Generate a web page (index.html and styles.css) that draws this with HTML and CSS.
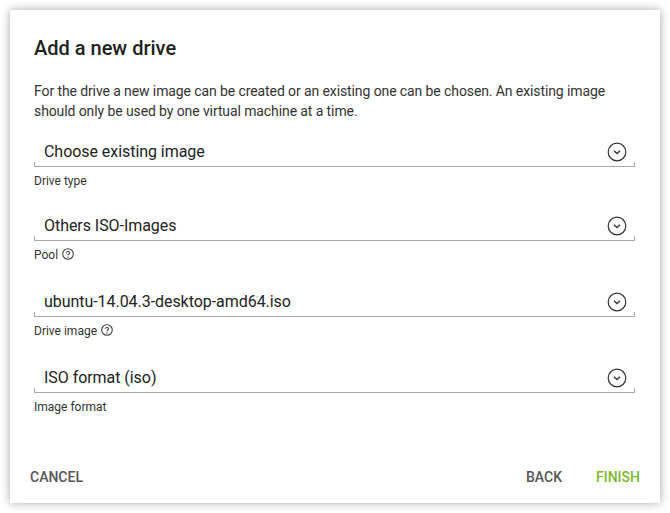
FILE: index.html
```html
<!DOCTYPE html>
<html>
<head>
<meta charset="utf-8">
<link rel="stylesheet" href="styles.css">
</head>
<body>
<div class="dialog">
  <div class="content">
    <h1 class="title">Add a new drive</h1>
    <p class="intro">For the drive a new image can be created or an existing one can be chosen. An existing image should only be used by one virtual machine at a time.</p>

    <div class="field">
      <div class="select"><span class="value">Choose existing image</span>
        <svg class="chev" width="20" height="20" viewBox="0 0 20 20"><circle cx="10" cy="10" r="8.8" fill="none" stroke="#333" stroke-width="1.2"/><path d="M7 8.8 L10 11.6 L13 8.8" fill="none" stroke="#333" stroke-width="1.3"/></svg>
      </div>
      <div class="label">Drive type</div>
    </div>

    <div class="field">
      <div class="select"><span class="value">Others ISO-Images</span>
        <svg class="chev" width="20" height="20" viewBox="0 0 20 20"><circle cx="10" cy="10" r="8.8" fill="none" stroke="#333" stroke-width="1.2"/><path d="M7 8.8 L10 11.6 L13 8.8" fill="none" stroke="#333" stroke-width="1.3"/></svg>
      </div>
      <div class="label has-help">Pool <svg class="help" width="12" height="12" viewBox="0 0 12 12"><circle cx="6" cy="6" r="5.3" fill="none" stroke="#444" stroke-width="1.1"/><path d="M4.3 4.8 C4.3 3.1 7.7 3.1 7.7 4.8 C7.7 6 6 6 6 7.3" fill="none" stroke="#444" stroke-width="1.1"/><circle cx="6" cy="9" r="0.7" fill="#444"/></svg></div>
    </div>

    <div class="field">
      <div class="select"><span class="value">ubuntu-14.04.3-desktop-amd64.iso</span>
        <svg class="chev" width="20" height="20" viewBox="0 0 20 20"><circle cx="10" cy="10" r="8.8" fill="none" stroke="#333" stroke-width="1.2"/><path d="M7 8.8 L10 11.6 L13 8.8" fill="none" stroke="#333" stroke-width="1.3"/></svg>
      </div>
      <div class="label has-help">Drive image <svg class="help" width="12" height="12" viewBox="0 0 12 12"><circle cx="6" cy="6" r="5.3" fill="none" stroke="#444" stroke-width="1.1"/><path d="M4.3 4.8 C4.3 3.1 7.7 3.1 7.7 4.8 C7.7 6 6 6 6 7.3" fill="none" stroke="#444" stroke-width="1.1"/><circle cx="6" cy="9" r="0.7" fill="#444"/></svg></div>
    </div>

    <div class="field">
      <div class="select"><span class="value">ISO format (iso)</span>
        <svg class="chev" width="20" height="20" viewBox="0 0 20 20"><circle cx="10" cy="10" r="8.8" fill="none" stroke="#333" stroke-width="1.2"/><path d="M7 8.8 L10 11.6 L13 8.8" fill="none" stroke="#333" stroke-width="1.3"/></svg>
      </div>
      <div class="label">Image format</div>
    </div>
  </div>

  <div class="actions">
    <button class="btn">Cancel</button>
    <div class="spacer"></div>
    <button class="btn">Back</button>
    <button class="btn primary">Finish</button>
  </div>
</div>
</body>
</html>
```

FILE: styles.css
```css
* { box-sizing: border-box; }
html, body { margin: 0; padding: 0; background: #fff; }
body {
  font-family: Roboto, "Liberation Sans", sans-serif;
  padding: 10px;
}
.dialog {
  width: 650px;
  height: 493px;
  background: #fff;
  box-shadow: 0 0 9px rgba(0,0,0,0.35);
  display: flex;
  flex-direction: column;
}
.content {
  padding: 26px 25px 0 24px;
  flex: 1;
}
.title {
  margin: 0;
  font-size: 20px;
  line-height: 24px;
  font-weight: 500;
  color: #212121;
}
.intro {
  margin: 21px 0 0;
  font-size: 14px;
  line-height: 20px;
  letter-spacing: -0.1px;
  color: #333;
}
.field { margin-top: 26px; }
.intro + .field { margin-top: 20px; }
.select {
  position: relative;
  display: flex;
  align-items: center;
  padding: 1px 0 4px 10px;
  border-bottom: 1px solid #aaa;
  height: 26px;
}
.select::before, .select::after {
  content: "";
  position: absolute;
  bottom: 0;
  width: 1px;
  height: 4px;
  background: #aaa;
}
.select::before { left: 0; }
.select::after { right: 0; }
.value {
  flex: 1;
  font-size: 16px;
  line-height: 20px;
  letter-spacing: -0.05px;
  color: #222;
}
.chev { margin-right: 8px; }
.label {
  margin-top: 6px;
  font-size: 12px;
  line-height: 16px;
  color: #333;
  display: flex;
  align-items: center;
  gap: 4px;
}
.label.has-help { height: 18px; align-items: flex-start; }
.help { display: block; margin-top: 1px; }
.actions {
  display: flex;
  align-items: center;
  padding: 0 12px 8px 12px;
  height: 45px;
}
.spacer { flex: 1; }
.btn {
  background: none;
  border: 0;
  font-family: Roboto, "Liberation Sans", sans-serif;
  font-size: 14px;
  font-weight: 500;
  text-transform: uppercase;
  color: #555;
  padding: 8px;
  line-height: 20px;
}
.btn.primary { color: #7ab82e; margin-left: 18px; }
```
